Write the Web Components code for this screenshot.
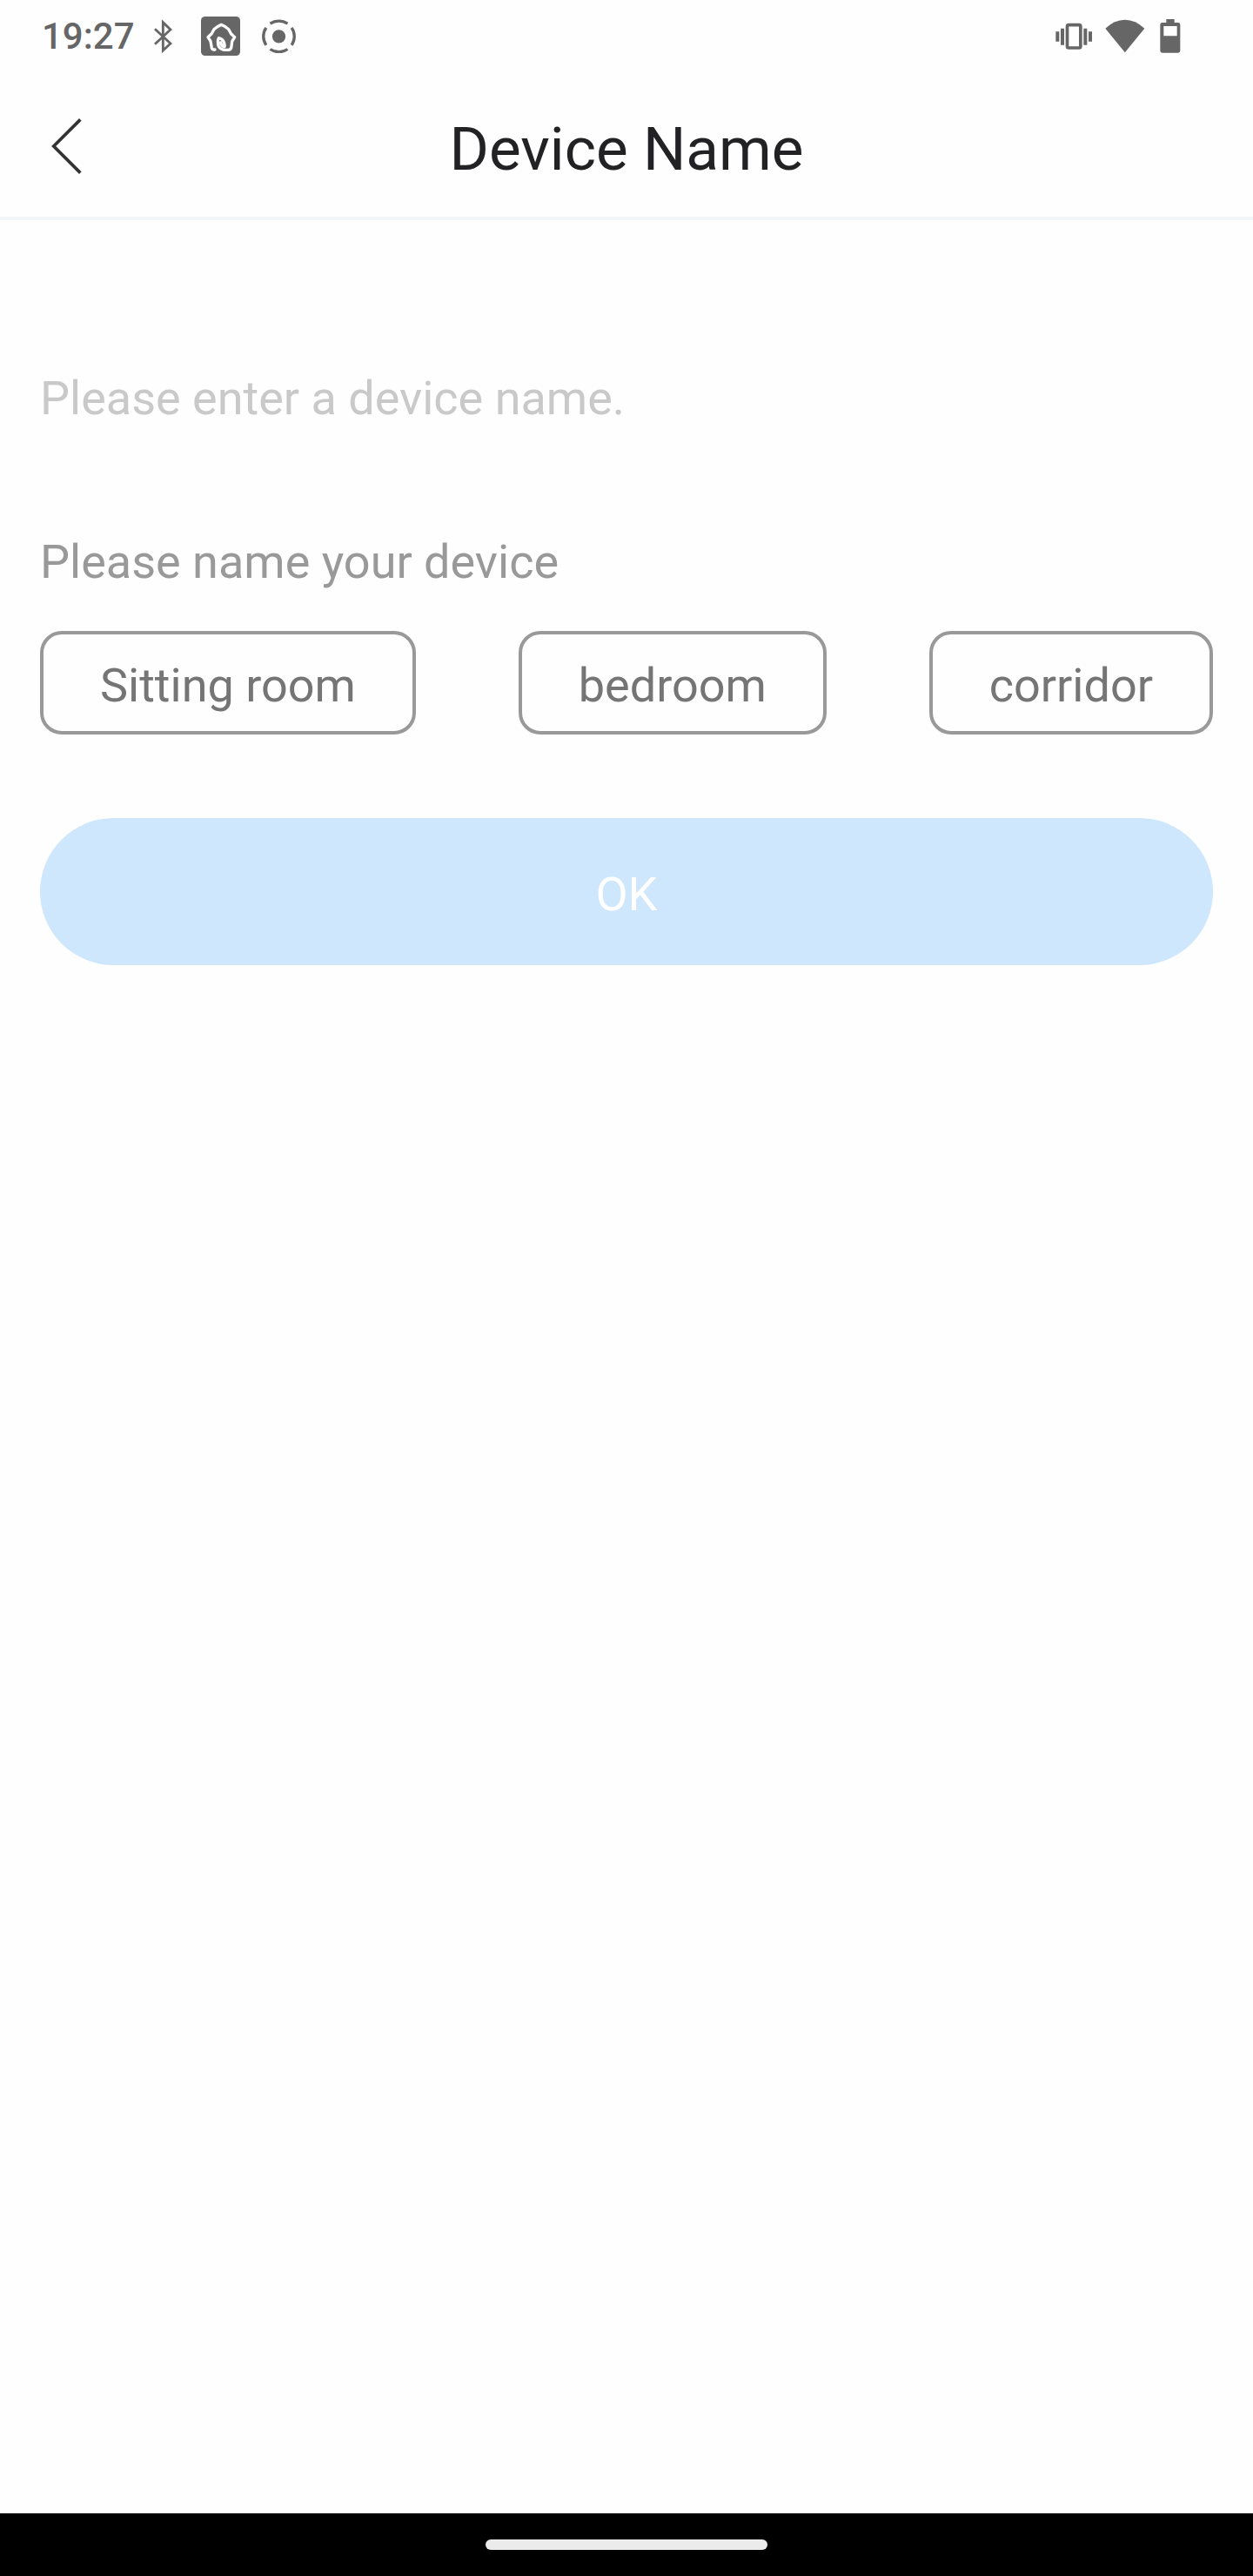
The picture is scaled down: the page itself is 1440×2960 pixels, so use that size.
<!DOCTYPE html>
<html lang="en">
<head>
<meta charset="utf-8">
<title>Device Name</title>
<style>
  body {
    margin: 0;
    background: #fefefe;
    font-family: Roboto, "Liberation Sans", sans-serif;
  }
</style>
</head>
<body>
<device-name-screen></device-name-screen>

<script>
const define = (name, style, body) => {
  window.customElements.define(name, class extends HTMLElement {
    connectedCallback() {
      if (this.shadowRoot)
        return;

      this.attachShadow({ mode: 'open' });
      this.shadowRoot.innerHTML = `<style>${style}</style>${body}`;
    }
  });
};

define("status-bar", `
  :host {
    display: flex;
    justify-content: space-between;
    box-sizing: border-box;
    height: 83px;
    padding: 0 83px 0 48px;
    color: #666;
  }
  .group {
    display: flex;
    align-items: center;
  }
  .time {
    font-size: 42px;
    font-weight: 500;
    line-height: 83px;
    width: 129px;
  }
  svg {
    display: block;
    fill: #666;
  }
  .line {
    fill: none;
    stroke: #666;
  }
  .bluetooth { margin-right: 33px; }
  .home { margin-right: 25px; }
  .vibrate { margin-right: 15px; }
  .wifi { margin-right: 17px; }
`, `
  <div class=group>
    <div class=time>19:27</div>
    <svg class=bluetooth width="21" height="41" viewBox="441 63 63 123">
      <path class=line stroke-width="8.500" d="M444 100L498 150L472 174V77L498 102L444 152"/>
    </svg>
    <svg class=home width="45" height="45" viewBox="33 27 135 135">
      <rect x="33" y="27" width="135" height="135" rx="14"/>
      <path fill="none" stroke="#fff" stroke-width="10" stroke-linejoin="round" stroke-linecap="round"
        d="M81 141H76Q69 140 69 130L66 112L57 98L69 87L78 71Q88 61 103 55Q118 61 128 71L137 87L149 98L140 113L138 130Q137 141 128 142H116Q99 141 93 128Q89 112 94 101Q104 103 110 111Q116 122 114 131Q103 129 101 117"/>
    </svg>
    <svg width="39" height="39" viewBox="811.5 66.5 117 117">
      <circle cx="870" cy="126" r="23"/>
      <path class=line stroke-width="10" d="M840 82A53 53 0 0 1 900 82M914 96A53 53 0 0 1 914 156M900 170A53 53 0 0 1 840 170M826 156A53 53 0 0 1 826 96"/>
    </svg>
  </div>
  <div class=group>
    <svg class=vibrate width="42" height="31" viewBox="67 79 126 93">
      <path d="M68 110h12v34H68zM85 99h12v57H85zM164 99h12v57h-12zM181 110h12v34h-12z"/>
      <rect class=line x="107.500" y="87" width="46" height="79" rx="5" stroke-width="11"/>
    </svg>
    <svg class=wifi width="46" height="39" viewBox="239 66 138 117">
      <path d="M240 98Q271 68 307.500 68Q344 68 375 98L307.500 181Z"/>
    </svg>
    <svg width="24" height="39" viewBox="428 66 72 117">
      <path fill-rule="evenodd" d="M450 66h28v12h13q7 0 7 7v90q0 7-7 7h-55q-7 0-7-7V85q0-7 7-7h14zM441 90v34h46V90z"/>
    </svg>
  </div>
`);

define("title-bar", `
  :host {
    display: grid;
    grid-template-columns: 200px 1fr 200px;
    align-items: center;
    box-sizing: border-box;
    height: 170px;
    padding-top: 11px;
    border-bottom: 4px solid #f3f6f8;
  }
  .back {
    display: block;
    margin: 0 0 7px 57px;
  }
  .title {
    text-align: center;
    font-size: 69.3px;
    line-height: 80px;
    color: #222224;
  }
`, `
  <svg class=back width="40" height="68" viewBox="81 72 120 204">
    <path d="M187 82L95 174L187 266" fill="none" stroke="#333" stroke-width="11"/>
  </svg>
  <div class=title><slot></slot></div>
`);

define("name-chip", `
  :host {
    display: block;
    box-sizing: border-box;
    height: 119px;
    padding: 3px 65px 0;
    border: 4px solid #999;
    border-radius: 25px;
    font-size: 54px;
    line-height: 111px;
    color: #757575;
    white-space: nowrap;
  }
`, `<slot></slot>`);

define("confirm-button", `
  :host {
    display: block;
    box-sizing: border-box;
    height: 169px;
    padding-top: 3px;
    border-radius: 84.5px;
    background: #cfe7fc;
    text-align: center;
    font-size: 54px;
    line-height: 169px;
    color: #fff;
  }
`, `<slot></slot>`);

define("navigation-bar", `
  :host {
    display: flex;
    justify-content: center;
    align-items: center;
    height: 72px;
    background: #000;
  }
  .handle {
    width: 324px;
    height: 12px;
    border-radius: 6px;
    background: #ebebeb;
  }
`, `<div class=handle></div>`);

define("device-name-screen", `
  :host {
    display: flex;
    flex-direction: column;
    width: 1440px;
    height: 2960px;
  }
  .content {
    flex: 1;
    padding: 165px 46px 0;
    font-size: 54px;
  }
  .placeholder, .label {
    line-height: 80px;
  }
  .placeholder {
    color: #c9c9c9;
  }
  .label {
    margin-top: 108px;
    color: #999;
  }
  .chips {
    display: flex;
    justify-content: space-between;
    margin: 39px 0 96px;
  }
`, `
  <status-bar></status-bar>
  <title-bar>Device Name</title-bar>
  <div class=content>
    <div class=placeholder>Please enter a device name.</div>
    <div class=label>Please name your device</div>
    <div class=chips>
      <name-chip>Sitting room</name-chip>
      <name-chip>bedroom</name-chip>
      <name-chip>corridor</name-chip>
    </div>
    <confirm-button>OK</confirm-button>
  </div>
  <navigation-bar></navigation-bar>
`);
</script>
</body>
</html>
